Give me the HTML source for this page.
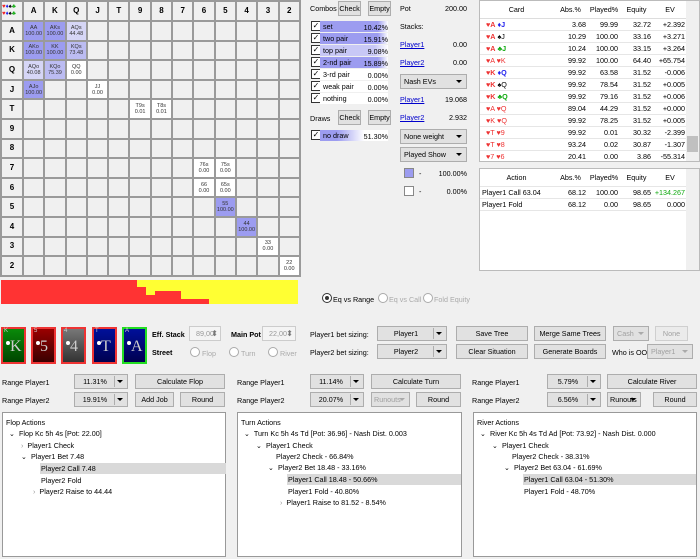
<!DOCTYPE html>
<html><head><meta charset="utf-8">
<style>
*{box-sizing:border-box;margin:0;padding:0}
body{width:700px;height:559px;background:#f0f0f0;font-family:"Liberation Sans",sans-serif;font-size:7.2px;color:#000;position:relative;overflow:hidden}
.a{position:absolute;white-space:nowrap}
table.g{position:absolute;left:0;top:0;border-collapse:collapse;table-layout:fixed}
table.g td{border:2px solid #9a9a9a;background:#f0f0f0;width:21.3px;height:19.6px;text-align:center;font-size:5.5px;line-height:6px;color:#333;padding:0;overflow:hidden}
table.g td.h{font-weight:bold;font-size:8px;color:#000}
td.b1{background:#9c9cf0 !important}
td.b2{background:#bcbcf2 !important}
td.b3{background:#d6d6f6 !important}
td.w{background:#fff !important}
.btn{position:absolute;background:#e1e1e1;border:1px solid #adadad;text-align:center;font-size:7.2px;line-height:13px;height:15px;white-space:nowrap;overflow:hidden}
.dis{color:#a0a0a0;background:#ebebeb;border-color:#cfcfcf}
.dd{position:absolute;background:#e1e1e1;border:1px solid #adadad;font-size:7.2px;line-height:13px;height:15px;text-align:center;padding-right:12px;white-space:nowrap;overflow:hidden}
.dd:after{content:"";position:absolute;right:4px;top:5px;border-left:3px solid transparent;border-right:3px solid transparent;border-top:3px solid #000}
.dd.dis:after{border-top-color:#aaa}
.dd .sep{position:absolute;right:12px;top:1px;bottom:1px;border-left:1px solid #adadad}
.cb{position:absolute;width:10px;height:10px;border:1px solid #333;background:#fff;font-size:8px;line-height:8px;text-align:center}
.bar{position:absolute;height:11px;font-size:7.2px;line-height:11px;padding-left:3px}
.pct{position:absolute;text-align:right;width:40px;font-size:7.2px}
.lnk{color:#00c;text-decoration:underline}
.tbl{position:absolute;background:#fff;border:1px solid #bbb}
.tr{position:absolute;left:0;right:13px;height:12px;border-bottom:1px solid #e6e6e6;font-size:7.2px;line-height:12px}
.tr span{position:absolute;text-align:right}
.r{color:#e33}.bl{color:#22e}.gr{color:#1a1}
.card{position:absolute;top:327px;width:25px;height:37px;border:2px solid #e33;color:#ddd;font-family:"Liberation Serif",serif}
.card .s{position:absolute;left:1px;top:-1px;font-size:6px;font-family:"Liberation Sans",sans-serif;color:#ccc}
.card .v{position:absolute;left:7px;top:9px;font-size:16px;color:#ccc}
.card .d{position:absolute;left:3px;top:12px;width:4px;height:4px;border-radius:2px;background:#fff}
.rad{position:absolute;width:10px;height:10px;border:1px solid #aaa;border-radius:5px;background:#fff}
.panel{position:absolute;top:412px;height:145px;background:#fff;border:1px solid #999;font-size:7.2px}
.panel div{position:absolute;white-space:nowrap}
.spin{position:absolute;height:15px;border:1px solid #ccc;background:#f4f4f4;color:#999;font-size:7.2px;line-height:13px;padding-left:6px}
.spin:after{content:"⬍";position:absolute;right:2px;top:0;color:#777;font-size:8px}
</style></head><body>

<table class="g">
<tr><td class="h" style="width:22px;height:20px;font-size:6px;line-height:7px;text-align:left"><span style="color:#e22">♥</span><span style="color:#22e">♦</span>♠<span style="color:#1a1">♣</span><br><span style="color:#e22">♥</span><span style="color:#22e">♦</span>♠<span style="color:#1a1">♣</span></td><td class="h">A</td><td class="h">K</td><td class="h">Q</td><td class="h">J</td><td class="h">T</td><td class="h">9</td><td class="h">8</td><td class="h">7</td><td class="h">6</td><td class="h">5</td><td class="h">4</td><td class="h">3</td><td class="h">2</td></tr>
<tr><td class="h">A</td><td class="b1">AA<br>100.00</td><td class="b1">AKs<br>100.00</td><td class="b3">AQs<br>44.48</td><td></td><td></td><td></td><td></td><td></td><td></td><td></td><td></td><td></td><td></td></tr>
<tr><td class="h">K</td><td class="b1">AKo<br>100.00</td><td class="b1">KK<br>100.00</td><td class="b2">KQs<br>73.48</td><td></td><td></td><td></td><td></td><td></td><td></td><td></td><td></td><td></td><td></td></tr>
<tr><td class="h">Q</td><td class="b3">AQo<br>40.08</td><td class="b2">KQo<br>75.39</td><td class="w">QQ<br>0.00</td><td></td><td></td><td></td><td></td><td></td><td></td><td></td><td></td><td></td><td></td></tr>
<tr><td class="h">J</td><td class="b1">AJo<br>100.00</td><td></td><td></td><td class="w">JJ<br>0.00</td><td></td><td></td><td></td><td></td><td></td><td></td><td></td><td></td><td></td></tr>
<tr><td class="h">T</td><td></td><td></td><td></td><td></td><td></td><td class="w">T9s<br>0.01</td><td class="w">T8s<br>0.01</td><td></td><td></td><td></td><td></td><td></td><td></td></tr>
<tr><td class="h">9</td><td></td><td></td><td></td><td></td><td></td><td></td><td></td><td></td><td></td><td></td><td></td><td></td><td></td></tr>
<tr><td class="h">8</td><td></td><td></td><td></td><td></td><td></td><td></td><td></td><td></td><td></td><td></td><td></td><td></td><td></td></tr>
<tr><td class="h">7</td><td></td><td></td><td></td><td></td><td></td><td></td><td></td><td></td><td class="w">76s<br>0.00</td><td class="w">75s<br>0.00</td><td></td><td></td><td></td></tr>
<tr><td class="h">6</td><td></td><td></td><td></td><td></td><td></td><td></td><td></td><td></td><td class="w">66<br>0.00</td><td class="w">65s<br>0.00</td><td></td><td></td><td></td></tr>
<tr><td class="h">5</td><td></td><td></td><td></td><td></td><td></td><td></td><td></td><td></td><td></td><td class="b1">55<br>100.00</td><td></td><td></td><td></td></tr>
<tr><td class="h">4</td><td></td><td></td><td></td><td></td><td></td><td></td><td></td><td></td><td></td><td></td><td class="b1">44<br>100.00</td><td></td><td></td></tr>
<tr><td class="h">3</td><td></td><td></td><td></td><td></td><td></td><td></td><td></td><td></td><td></td><td></td><td></td><td class="w">33<br>0.00</td><td></td></tr>
<tr><td class="h">2</td><td></td><td></td><td></td><td></td><td></td><td></td><td></td><td></td><td></td><td></td><td></td><td></td><td class="w">22<br>0.00</td></tr>
</table>

<div class="a" style="left:1px;top:280px;width:297px;height:24px;background:#ffff33"></div>
<div class="a" style="left:1px;top:280px;width:136px;height:24px;background:#f33"></div>
<div class="a" style="left:137px;top:287px;width:9px;height:17px;background:#f33"></div>
<div class="a" style="left:146px;top:295px;width:9px;height:9px;background:#f33"></div>
<div class="a" style="left:155px;top:291px;width:26px;height:13px;background:#f33"></div>
<div class="a" style="left:181px;top:299px;width:28px;height:5px;background:#f33"></div>

<div class="a" style="left:310px;top:4px">Combos</div>
<div class="btn" style="left:338px;top:1px;width:23px">Check</div>
<div class="btn" style="left:368px;top:1px;width:23px">Empty</div>
<div class="cb" style="left:311px;top:21px">✓</div><div class="bar" style="left:320px;top:21px;width:68px;background:linear-gradient(90deg,#9c9cf0 85%,#fff)">set</div><div class="pct" style="left:348px;top:23px">10.42%</div>
<div class="cb" style="left:311px;top:33px">✓</div><div class="bar" style="left:320px;top:33px;width:68px;background:linear-gradient(90deg,#9c9cf0 85%,#fff)">two pair</div><div class="pct" style="left:348px;top:35px">15.91%</div>
<div class="cb" style="left:311px;top:45px">✓</div><div class="bar" style="left:320px;top:45px;width:68px;background:linear-gradient(90deg,#c8c8f6 80%,#fff)">top pair</div><div class="pct" style="left:348px;top:47px">9.08%</div>
<div class="cb" style="left:311px;top:57px">✓</div><div class="bar" style="left:320px;top:57px;width:68px;background:linear-gradient(90deg,#9c9cf0 85%,#fff)">2-nd pair</div><div class="pct" style="left:348px;top:59px">15.89%</div>
<div class="cb" style="left:311px;top:69px">✓</div><div class="bar" style="left:320px;top:69px;width:68px;background:#fff">3-rd pair</div><div class="pct" style="left:348px;top:71px">0.00%</div>
<div class="cb" style="left:311px;top:81px">✓</div><div class="bar" style="left:320px;top:81px;width:68px;background:#fff">weak pair</div><div class="pct" style="left:348px;top:83px">0.00%</div>
<div class="cb" style="left:311px;top:93px">✓</div><div class="bar" style="left:320px;top:93px;width:68px;background:#fff">nothing</div><div class="pct" style="left:348px;top:95px">0.00%</div>
<div class="a" style="left:310px;top:114px">Draws</div>
<div class="btn" style="left:338px;top:110px;width:23px">Check</div>
<div class="btn" style="left:368px;top:110px;width:23px">Empty</div>
<div class="cb" style="left:311px;top:130px">✓</div><div class="bar" style="left:320px;top:130px;width:68px;background:linear-gradient(90deg,#9c9cf0 25%,#fff 65%)">no draw</div><div class="pct" style="left:348px;top:132px">51.30%</div>

<div class="a" style="left:400px;top:4px">Pot</div><div class="a" style="left:430px;top:4px;width:37px;text-align:right">200.00</div>
<div class="a" style="left:400px;top:22px">Stacks:</div>
<div class="a lnk" style="left:400px;top:40px">Player1</div><div class="a" style="left:430px;top:40px;width:37px;text-align:right">0.00</div>
<div class="a lnk" style="left:400px;top:58px">Player2</div><div class="a" style="left:430px;top:58px;width:37px;text-align:right">0.00</div>
<div class="dd" style="left:400px;top:74px;width:67px;text-align:left;padding-left:3px">Nash EVs</div>
<div class="a lnk" style="left:400px;top:95px">Player1</div><div class="a" style="left:430px;top:95px;width:37px;text-align:right">19.068</div>
<div class="a lnk" style="left:400px;top:113px">Player2</div><div class="a" style="left:430px;top:113px;width:37px;text-align:right">2.932</div>
<div class="dd" style="left:400px;top:129px;width:67px;text-align:left;padding-left:3px">None weight</div>
<div class="dd" style="left:400px;top:147px;width:67px;text-align:left;padding-left:3px">Played Show</div>
<div class="a" style="left:404px;top:168px;width:10px;height:10px;background:#9c9cf0;border:1px solid #888"></div>
<div class="a" style="left:419px;top:169px">-</div><div class="a" style="left:430px;top:169px;width:37px;text-align:right">100.00%</div>
<div class="a" style="left:404px;top:186px;width:10px;height:10px;background:#fff;border:1px solid #888"></div>
<div class="a" style="left:419px;top:187px">-</div><div class="a" style="left:430px;top:187px;width:37px;text-align:right">0.00%</div>

<div class="tbl" style="left:479px;top:0;width:221px;height:162px">
 <div class="tr" style="top:0;height:18px;line-height:18px;border-bottom:1px solid #ddd"><span style="left:0;width:73px;text-align:center">Card</span><span style="left:73px;width:35px;text-align:center">Abs.%</span><span style="left:108px;width:32px;text-align:center">Played%</span><span style="left:140px;width:33px;text-align:center">Equity</span><span style="left:173px;width:34px;text-align:center">EV</span></div>
 <div class="tr" style="top:18px"><span style="left:6px"><b class="r">♥A</b> <b class="bl">♦J</b></span><span style="left:73px;width:33px">3.68</span><span style="left:108px;width:30px">99.99</span><span style="left:140px;width:31px">32.72</span><span style="left:173px;width:32px">+2.392</span></div>
 <div class="tr" style="top:30px"><span style="left:6px"><b class="r">♥A</b> ♠J</span><span style="left:73px;width:33px">10.29</span><span style="left:108px;width:30px">100.00</span><span style="left:140px;width:31px">33.16</span><span style="left:173px;width:32px">+3.271</span></div>
 <div class="tr" style="top:42px"><span style="left:6px"><b class="r">♥A</b> <b class="gr">♣J</b></span><span style="left:73px;width:33px">10.24</span><span style="left:108px;width:30px">100.00</span><span style="left:140px;width:31px">33.15</span><span style="left:173px;width:32px">+3.264</span></div>
 <div class="tr" style="top:54px"><span style="left:6px" class="r">♥A ♥K</span><span style="left:73px;width:33px">99.92</span><span style="left:108px;width:30px">100.00</span><span style="left:140px;width:31px">64.40</span><span style="left:173px;width:32px">+65.754</span></div>
 <div class="tr" style="top:66px"><span style="left:6px"><b class="r">♥K</b> <b class="bl">♦Q</b></span><span style="left:73px;width:33px">99.92</span><span style="left:108px;width:30px">63.58</span><span style="left:140px;width:31px">31.52</span><span style="left:173px;width:32px">-0.006</span></div>
 <div class="tr" style="top:78px"><span style="left:6px"><b class="r">♥K</b> ♠Q</span><span style="left:73px;width:33px">99.92</span><span style="left:108px;width:30px">78.54</span><span style="left:140px;width:31px">31.52</span><span style="left:173px;width:32px">+0.005</span></div>
 <div class="tr" style="top:90px"><span style="left:6px"><b class="r">♥K</b> <b class="gr">♣Q</b></span><span style="left:73px;width:33px">99.92</span><span style="left:108px;width:30px">79.16</span><span style="left:140px;width:31px">31.52</span><span style="left:173px;width:32px">+0.006</span></div>
 <div class="tr" style="top:102px"><span style="left:6px" class="r">♥A ♥Q</span><span style="left:73px;width:33px">89.04</span><span style="left:108px;width:30px">44.29</span><span style="left:140px;width:31px">31.52</span><span style="left:173px;width:32px">+0.000</span></div>
 <div class="tr" style="top:114px"><span style="left:6px" class="r">♥K ♥Q</span><span style="left:73px;width:33px">99.92</span><span style="left:108px;width:30px">78.25</span><span style="left:140px;width:31px">31.52</span><span style="left:173px;width:32px">+0.005</span></div>
 <div class="tr" style="top:126px"><span style="left:6px" class="r">♥T ♥9</span><span style="left:73px;width:33px">99.92</span><span style="left:108px;width:30px">0.01</span><span style="left:140px;width:31px">30.32</span><span style="left:173px;width:32px">-2.399</span></div>
 <div class="tr" style="top:138px"><span style="left:6px" class="r">♥T ♥8</span><span style="left:73px;width:33px">93.24</span><span style="left:108px;width:30px">0.02</span><span style="left:140px;width:31px">30.87</span><span style="left:173px;width:32px">-1.307</span></div>
 <div class="tr" style="top:150px;border:0"><span style="left:6px" class="r">♥7 ♥6</span><span style="left:73px;width:33px">20.41</span><span style="left:108px;width:30px">0.00</span><span style="left:140px;width:31px">3.86</span><span style="left:173px;width:32px">-55.314</span></div>
 <div class="a" style="right:0;top:0;width:13px;height:160px;background:#f0f0f0"></div>
 <div class="a" style="right:1px;top:135px;width:11px;height:16px;background:#c0c0c0"></div>
</div>

<div class="tbl" style="left:479px;top:168px;width:221px;height:103px">
 <div class="tr" style="top:0;height:18px;line-height:18px"><span style="left:0;width:73px;text-align:center">Action</span><span style="left:73px;width:35px;text-align:center">Abs.%</span><span style="left:108px;width:32px;text-align:center">Played%</span><span style="left:140px;width:33px;text-align:center">Equity</span><span style="left:173px;width:34px;text-align:center">EV</span></div>
 <div class="tr" style="top:18px"><span style="left:2px">Player1 Call 63.04</span><span style="left:73px;width:33px">68.12</span><span style="left:108px;width:30px">100.00</span><span style="left:140px;width:31px">98.65</span><span style="left:173px;width:32px" class="gr">+134.267</span></div>
 <div class="tr" style="top:30px"><span style="left:2px">Player1 Fold</span><span style="left:73px;width:33px">68.12</span><span style="left:108px;width:30px">0.00</span><span style="left:140px;width:31px">98.65</span><span style="left:173px;width:32px">0.000</span></div>
 <div class="a" style="right:0;top:0;width:13px;height:101px;background:#f0f0f0"></div>
</div>

<div class="rad" style="left:322px;top:293px;border-color:#333"><div style="position:absolute;left:2px;top:2px;width:4px;height:4px;border-radius:2px;background:#333"></div></div>
<div class="a" style="left:333px;top:295px">Eq vs Range</div>
<div class="rad" style="left:378px;top:293px"></div><div class="a" style="left:389px;top:295px;color:#aaa">Eq vs Call</div>
<div class="rad" style="left:423px;top:293px"></div><div class="a" style="left:434px;top:295px;color:#aaa">Fold Equity</div>

<div class="card" style="left:1px;background:linear-gradient(#0a8a0a,#004400)"><span class="s">K</span><span class="d"></span><span class="v">K</span></div>
<div class="card" style="left:31px;background:linear-gradient(#9a0000,#3a0000)"><span class="s">5</span><span class="d"></span><span class="v">5</span></div>
<div class="card" style="left:61px;background:linear-gradient(#777,#333)"><span class="s">4</span><span class="d"></span><span class="v">4</span></div>
<div class="card" style="left:92px;background:linear-gradient(#00109a,#000050)"><span class="s">T</span><span class="d"></span><span class="v">T</span></div>
<div class="card" style="left:122px;border-color:#2d2;background:linear-gradient(#00109a,#000050)"><span class="s">A</span><span class="d"></span><span class="v">A</span></div>

<div class="a" style="left:152px;top:330px;font-weight:bold">Eff. Stack</div>
<div class="spin" style="left:189px;top:326px;width:32px">89,00</div>
<div class="a" style="left:231px;top:330px;font-weight:bold">Main Pot</div>
<div class="spin" style="left:262px;top:326px;width:34px">22,00</div>
<div class="a" style="left:152px;top:348px;font-weight:bold">Street</div>
<div class="rad" style="left:190px;top:347px"></div><div class="a" style="left:202px;top:349px;color:#aaa">Flop</div>
<div class="rad" style="left:229px;top:347px"></div><div class="a" style="left:241px;top:349px;color:#aaa">Turn</div>
<div class="rad" style="left:268px;top:347px"></div><div class="a" style="left:280px;top:349px;color:#aaa">River</div>

<div class="a" style="left:310px;top:330px">Player1 bet sizing:</div>
<div class="dd" style="left:377px;top:326px;width:70px">Player1<span class="sep"></span></div>
<div class="btn" style="left:456px;top:326px;width:72px">Save Tree</div>
<div class="btn" style="left:534px;top:326px;width:72px">Merge Same Trees</div>
<div class="dd dis" style="left:613px;top:326px;width:36px;text-align:left;padding-left:3px">Cash</div>
<div class="btn dis" style="left:655px;top:326px;width:33px">None</div>
<div class="a" style="left:310px;top:348px">Player2 bet sizing:</div>
<div class="dd" style="left:377px;top:344px;width:70px">Player2<span class="sep"></span></div>
<div class="btn" style="left:456px;top:344px;width:72px">Clear Situation</div>
<div class="btn" style="left:534px;top:344px;width:72px">Generate Boards</div>
<div class="a" style="left:612px;top:348px">Who is OOP:</div>
<div class="dd dis" style="left:647px;top:344px;width:46px;text-align:left;padding-left:3px">Player1</div>

<div class="a" style="left:2px;top:378px">Range Player1</div>
<div class="dd" style="left:74px;top:374px;width:54px">11.31%<span class="sep"></span></div>
<div class="btn" style="left:135px;top:374px;width:90px">Calculate Flop</div>
<div class="a" style="left:2px;top:396px">Range Player2</div>
<div class="dd" style="left:74px;top:392px;width:54px">19.91%<span class="sep"></span></div>
<div class="btn" style="left:135px;top:392px;width:39px">Add Job</div>
<div class="btn" style="left:180px;top:392px;width:45px">Round</div>

<div class="a" style="left:237px;top:378px">Range Player1</div>
<div class="dd" style="left:310px;top:374px;width:54px">11.14%<span class="sep"></span></div>
<div class="btn" style="left:371px;top:374px;width:90px">Calculate Turn</div>
<div class="a" style="left:237px;top:396px">Range Player2</div>
<div class="dd" style="left:310px;top:392px;width:54px">20.07%<span class="sep"></span></div>
<div class="dd dis" style="left:371px;top:392px;width:39px;text-align:left;padding-left:2px">Runouts</div>
<div class="btn" style="left:416px;top:392px;width:45px">Round</div>

<div class="a" style="left:472px;top:378px">Range Player1</div>
<div class="dd" style="left:547px;top:374px;width:54px">5.79%<span class="sep"></span></div>
<div class="btn" style="left:607px;top:374px;width:90px">Calculate River</div>
<div class="a" style="left:472px;top:396px">Range Player2</div>
<div class="dd" style="left:547px;top:392px;width:54px">6.56%<span class="sep"></span></div>
<div class="dd" style="left:607px;top:392px;width:34px;text-align:left;padding-left:2px">Runouts</div>
<div class="btn" style="left:653px;top:392px;width:44px">Round</div>

<div class="panel" style="left:2px;width:224px">
 <div style="left:3px;top:5px">Flop Actions</div>
 <div style="left:6px;top:16px">⌄&nbsp; Flop Kc 5h 4s [Pot: 22.00]</div>
 <div style="left:18px;top:28px"><span style="color:#999">›</span>&nbsp; Player1 Check</div>
 <div style="left:18px;top:39px">⌄&nbsp; Player1 Bet 7.48</div>
 <div style="left:37px;top:50px;width:186px;height:11px;background:#d9d9d9;padding-left:1px;line-height:11px">Player2 Call 7.48</div>
 <div style="left:38px;top:63px">Player2 Fold</div>
 <div style="left:30px;top:74px"><span style="color:#999">›</span>&nbsp; Player2 Raise to 44.44</div>
</div>
<div class="panel" style="left:237px;width:225px">
 <div style="left:3px;top:5px">Turn Actions</div>
 <div style="left:6px;top:16px">⌄&nbsp; Turn Kc 5h 4s Td [Pot: 36.96] - Nash Dist. 0.003</div>
 <div style="left:18px;top:28px">⌄&nbsp; Player1 Check</div>
 <div style="left:38px;top:39px">Player2 Check - 66.84%</div>
 <div style="left:30px;top:50px">⌄&nbsp; Player2 Bet 18.48 - 33.16%</div>
 <div style="left:49px;top:61px;width:174px;height:11px;background:#d9d9d9;padding-left:1px;line-height:11px">Player1 Call 18.48 - 50.66%</div>
 <div style="left:50px;top:74px">Player1 Fold - 40.80%</div>
 <div style="left:42px;top:85px"><span style="color:#999">›</span>&nbsp; Player1 Raise to 81.52 - 8.54%</div>
</div>
<div class="panel" style="left:473px;width:224px">
 <div style="left:3px;top:5px">River Actions</div>
 <div style="left:6px;top:16px">⌄&nbsp; River Kc 5h 4s Td Ad [Pot: 73.92] - Nash Dist. 0.000</div>
 <div style="left:18px;top:28px">⌄&nbsp; Player1 Check</div>
 <div style="left:38px;top:39px">Player2 Check - 38.31%</div>
 <div style="left:30px;top:50px">⌄&nbsp; Player2 Bet 63.04 - 61.69%</div>
 <div style="left:49px;top:61px;width:173px;height:11px;background:#d9d9d9;padding-left:1px;line-height:11px">Player1 Call 63.04 - 51.30%</div>
 <div style="left:50px;top:74px">Player1 Fold - 48.70%</div>
</div>
</body></html>
